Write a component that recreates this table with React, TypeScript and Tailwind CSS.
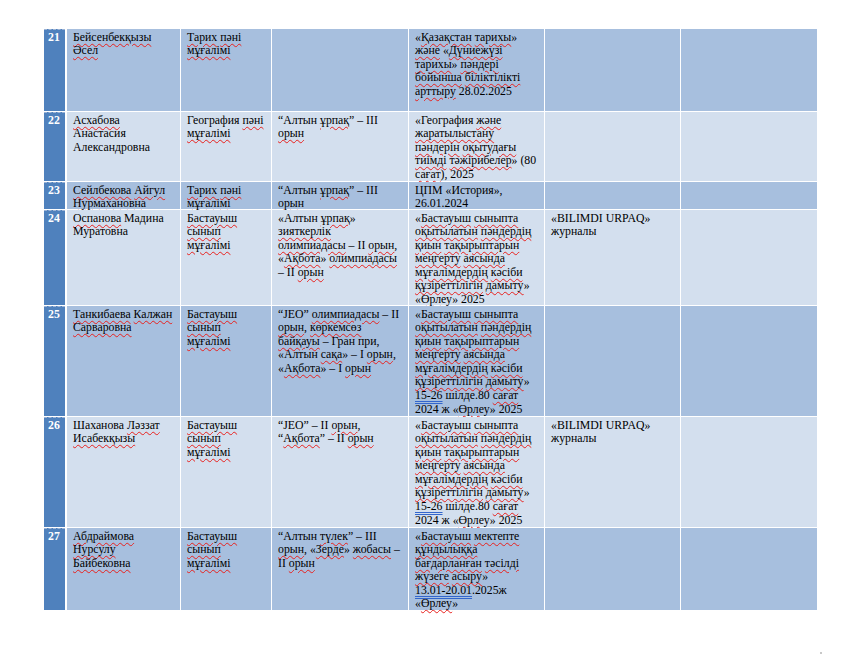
import React from 'react';

type Row = {
    no: number;
    cells: string[][];
};

const rows: Row[] = [
    {
        no: 21,
        cells: [
            ['[[Бейсенбекқызы]]', '[[Әсел]]'],
            ['[[Тарих]] [[пәні]]', '[[мұғалімі]]'],
            [],
            [
                '«[[Қазақстан]] [[тарихы]]»',
                '[[және]] «[[Дүниежүзі]]',
                '[[тарихы]]» [[пәндері]]',
                '[[бойынша]] [[біліктілікті]]',
                '[[арттыру]] 28.02.2025',
            ],
            [],
            [],
        ],
    },
    {
        no: 22,
        cells: [
            ['[[Асхабова]]', 'Анастасия', 'Александровна'],
            ['География [[пәні]]', '[[мұғалімі]]'],
            ['“Алтын [[ұрпақ]]” – III', '[[орын]]'],
            [
                '«География [[және]]',
                '[[жаратылыстану]]',
                '[[пәндерін]] [[оқытудағы]]',
                '[[тиімді]] [[тәжірибелер]]» (80',
                '[[сағат]]), 2025',
            ],
            [],
            [],
        ],
    },
    {
        no: 23,
        cells: [
            ['[[Сейлбекова]] [[Айгул]]', '[[Нурмахановна]]'],
            ['[[Тарих]] [[пәні]]', '[[мұғалімі]]'],
            ['“Алтын [[ұрпақ]]” – III', '[[орын]]'],
            ['ЦПМ «История»,', '26.01.2024'],
            [],
            [],
        ],
    },
    {
        no: 24,
        cells: [
            ['[[Оспанова]] Мадина', 'Муратовна'],
            ['[[Бастауыш]]', '[[сынып]]', '[[мұғалімі]]'],
            [
                '«Алтын [[ұрпақ]]»',
                '[[зияткерлік]]',
                '[[олимпиадасы]] – II [[орын]],',
                '«[[Ақбота]]» [[олимпиадасы]]',
                '– II [[орын]]',
            ],
            [
                '«[[Бастауыш]] [[сыныпта]]',
                '[[оқытылатын]] [[пәндердің]]',
                '[[қиын]] [[тақырыптарын]]',
                '[[меңгерту]] [[аясында]]',
                '[[мұғалімдердің]] [[кәсіби]]',
                '[[құзіреттілігін]] [[дамыту]]»',
                '«[[Өрлеу]]» 2025',
            ],
            ['«BILIMDI URPAQ»', 'журналы'],
            [],
        ],
    },
    {
        no: 25,
        cells: [
            ['[[Танкибаева]] [[Калжан]]', '[[Сарваровна]]'],
            ['[[Бастауыш]]', '[[сынып]]', '[[мұғалімі]]'],
            [
                '“JEO” [[олимпиадасы]] – II',
                '[[орын]], [[көркемсөз]]',
                '[[байқауы]] – Гран при,',
                '«Алтын [[сақа]]» – I [[орын]],',
                '«[[Ақбота]]» – I [[орын]]',
            ],
            [
                '«[[Бастауыш]] [[сыныпта]]',
                '[[оқытылатын]] [[пәндердің]]',
                '[[қиын]] [[тақырыптарын]]',
                '[[меңгерту]] [[аясында]]',
                '[[мұғалімдердің]] [[кәсіби]]',
                '[[құзіреттілігін]] [[дамыту]]»',
                '{{15-26}} шілде.80 [[сағат]]',
                '2024 ж «[[Өрлеу]]» 2025',
            ],
            [],
            [],
        ],
    },
    {
        no: 26,
        cells: [
            ['Шаханова [[Ләззат]]', '[[Исабекқызы]]'],
            ['[[Бастауыш]]', '[[сынып]]', '[[мұғалімі]]'],
            ['“JEO” – II [[орын]],', '“[[Ақбота]]” – II [[орын]]'],
            [
                '«[[Бастауыш]] [[сыныпта]]',
                '[[оқытылатын]] [[пәндердің]]',
                '[[қиын]] [[тақырыптарын]]',
                '[[меңгерту]] [[аясында]]',
                '[[мұғалімдердің]] [[кәсіби]]',
                '[[құзіреттілігін]] [[дамыту]]»',
                '{{15-26}} шілде.80 [[сағат]]',
                '2024 ж «[[Өрлеу]]» 2025',
            ],
            ['«BILIMDI URPAQ»', 'журналы'],
            [],
        ],
    },
    {
        no: 27,
        cells: [
            ['[[Абдраймова]]', '[[Нурсулу]]', '[[Байбековна]]'],
            ['[[Бастауыш]]', '[[сынып]]', '[[мұғалімі]]'],
            ['“Алтын [[түлек]]” – III', '[[орын]], «[[Зерде]]» [[жобасы]] –', 'II [[орын]]'],
            [
                '«[[Бастауыш]] [[мектепте]]',
                '[[құндылыққа]]',
                '[[бағдарланған]] [[тәсілді]]',
                '[[жүзеге]] [[асыру]]»',
                '{{13.01-20.01}}.2025ж',
                '«[[Өрлеу]]»',
            ],
            [],
            [],
        ],
    },
];

// [[word]] = red spell-check squiggle, {{text}} = blue double underline
function Marked({ text }: { text: string }) {
    const parts = text.split(/(\[\[.*?\]\]|\{\{.*?\}\})/);
    return (
        <>
            {parts.map((p, i) => {
                if (p.startsWith('[[')) {
                    return (
                        <span
                            key={i}
                            className="underline decoration-wavy decoration-[#e8211d] decoration-1 underline-offset-[2px]"
                        >
                            {p.slice(2, -2)}
                        </span>
                    );
                }
                if (p.startsWith('{{')) {
                    return (
                        <span
                            key={i}
                            className="underline decoration-double decoration-[#3366cc] decoration-1 underline-offset-[2px]"
                        >
                            {p.slice(2, -2)}
                        </span>
                    );
                }
                return <React.Fragment key={i}>{p}</React.Fragment>;
            })}
        </>
    );
}

export default function App() {
    return (
        <div className="min-h-[655px] w-[850px] bg-white pt-[29px] pl-[44px] font-['Liberation_Serif','Times_New_Roman',serif] text-[11.8px] leading-[13.6px] text-black">
            <div className="grid w-[773px] grid-cols-[21px_114px_90px_136px_135px_135px_136px] grid-rows-[82px_69px_27px_95px_110px_110px_82px] gap-px bg-white">
                {rows.map((row, ri) => {
                    const band = ri % 2 === 0 ? 'bg-[#a7bfde]' : 'bg-[#d3dfee]';
                    return (
                        <React.Fragment key={row.no}>
                            <div className="border-t border-dashed border-[#9db4d6] bg-[#4f81bd] pt-[1px] pl-[4px] font-bold text-white">
                                {row.no}
                            </div>
                            {row.cells.map((lines, ci) => (
                                <div
                                    key={ci}
                                    className={`${band} ${ci === 0 ? 'ml-px pl-[6px]' : 'pl-[6px]'} pt-[1.5px]`}
                                >
                                    {lines.map((line, li) => (
                                        <div key={li} className="whitespace-nowrap">
                                            <Marked text={line} />
                                        </div>
                                    ))}
                                </div>
                            ))}
                        </React.Fragment>
                    );
                })}
            </div>
            <div className="ml-[776px] mt-[42px] h-[2px] w-[2px] bg-[#c8c8c8]" />
        </div>
    );
}
